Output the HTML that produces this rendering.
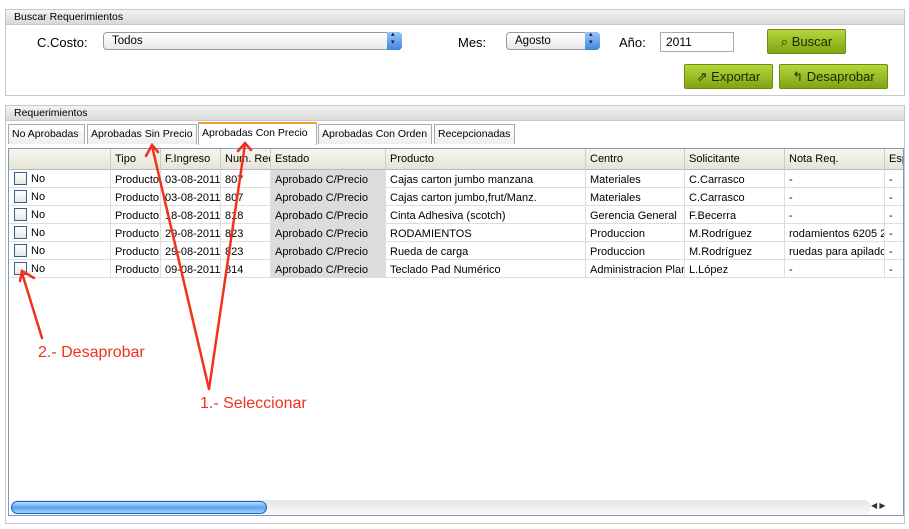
<!DOCTYPE html>
<html><head><meta charset="utf-8"><style>
*{box-sizing:border-box;margin:0;padding:0}
body{width:909px;height:529px;background:#fff;position:relative;font-family:"Liberation Sans",sans-serif;font-size:11px;color:#000;overflow:hidden}
.a{position:absolute}
.panel{position:absolute;border:1px solid #c8c8c8;background:#fff}
.hd{position:absolute;left:0;right:0;top:0;height:15px;background:linear-gradient(#f4f4f4,#d8d8d8);border-bottom:1px solid #c8c8c8;padding:1px 8px;font-size:10.5px}
.sel{position:absolute;height:18px;border:1px solid #999;border-radius:4px;background:linear-gradient(#fff,#e8e8e8);padding:2px 8px;font-size:11.5px}
.sel i{position:absolute;right:-1px;top:-1px;width:15px;height:18px;border-radius:0 4px 4px 0;background:linear-gradient(#9cc6f5,#3f86df);}
.sel i:before{content:"▴";position:absolute;left:4px;top:-2px;font-size:7px;font-style:normal;color:#123}
.sel i:after{content:"▾";position:absolute;left:4px;top:6px;font-size:7px;font-style:normal;color:#123}
.btn{position:absolute;height:25px;border:1px solid #6f8f0a;border-radius:2px;background:linear-gradient(#b7d53c,#7fa512);font-size:13px;color:#1a2a00;text-align:center;line-height:23px}
.tab{position:absolute;top:124px;height:20px;border:1px solid #aaa;border-bottom:none;background:linear-gradient(#fff,#eee);font-size:10.5px;padding:3px 3px}
.grid{position:absolute;left:8px;top:148px;width:896px;height:368px;border:1px solid #7d9ab8;background:#fff;overflow:hidden}
.row{position:absolute;left:0;width:896px;height:18px;border-bottom:1px solid #ddd;font-size:11px}
.c{position:absolute;top:0;height:18px;padding:4px 4px 0;white-space:nowrap;overflow:hidden;border-left:1px solid #ddd}
.hdr{background:linear-gradient(#f7f7f0,#e4e4d6);height:21px;border-bottom:1px solid #bbb}
.hdr .c{height:21px;padding-top:4px;border-left:1px solid #ccc}
.cb{position:absolute;left:5px;top:2px;width:13px;height:13px;border:1px solid #355f8c;background:linear-gradient(#fff,#e6e6e6)}
.red{position:absolute;color:#f0321e;font-size:16px}
</style></head><body>
<div class="panel" style="left:5px;top:9px;width:900px;height:87px">
 <div class="hd">Buscar Requerimientos</div>
</div>
<div class="a" style="left:37px;top:35px;font-size:13px">C.Costo:</div>
<div class="sel" style="left:103px;top:32px;width:299px">Todos<i></i></div>
<div class="a" style="left:458px;top:35px;font-size:13px">Mes:</div>
<div class="sel" style="left:506px;top:32px;width:94px">Agosto<i></i></div>
<div class="a" style="left:619px;top:35px;font-size:13px">Año:</div>
<div class="a" style="left:660px;top:32px;width:74px;height:20px;border:1px solid #aaa;padding:2px 5px;font-size:12px">2011</div>
<div class="btn" style="left:767px;top:29px;width:79px">⌕ Buscar</div>
<div class="btn" style="left:684px;top:64px;width:89px">⇗ Exportar</div>
<div class="btn" style="left:779px;top:64px;width:109px">↰ Desaprobar</div>

<div class="panel" style="left:5px;top:105px;width:900px;height:419px">
 <div class="hd">Requerimientos</div>
</div>
<div class="tab" style="left:8px;width:77px">No Aprobadas</div>
<div class="tab" style="left:87px;width:110px">Aprobadas Sin Precio</div>
<div class="tab" style="left:198px;top:122px;width:119px;height:23px;background:#fff;border-top:2px solid #f0a030">Aprobadas Con Precio</div>
<div class="tab" style="left:318px;width:114px">Aprobadas Con Orden</div>
<div class="tab" style="left:434px;width:81px">Recepcionadas</div>

<div class="grid">
 <div class="a" style="left:261px;top:21px;width:115px;height:108px;background:#dcdcdc"></div>
 <div class="row hdr" style="top:0">
  <div class="c" style="left:101px">Tipo</div><div class="c" style="left:151px">F.Ingreso</div><div class="c" style="left:211px;width:50px">Num. Req</div><div class="c" style="left:261px">Estado</div><div class="c" style="left:376px">Producto</div><div class="c" style="left:576px">Centro</div><div class="c" style="left:675px">Solicitante</div><div class="c" style="left:775px">Nota Req.</div><div class="c" style="left:875px">Esp</div>
 </div>
 <div class="row" style="top:21px"><div class="cb"></div><div class="a" style="left:22px;top:3px">No</div><div class="c" style="left:101px">Producto</div><div class="c" style="left:151px">03-08-2011</div><div class="c" style="left:211px">807</div><div class="c" style="left:261px">Aprobado C/Precio</div><div class="c" style="left:376px">Cajas carton jumbo manzana</div><div class="c" style="left:576px">Materiales</div><div class="c" style="left:675px">C.Carrasco</div><div class="c" style="left:775px">-</div><div class="c" style="left:875px">-</div></div>
 <div class="row" style="top:39px"><div class="cb"></div><div class="a" style="left:22px;top:3px">No</div><div class="c" style="left:101px">Producto</div><div class="c" style="left:151px">03-08-2011</div><div class="c" style="left:211px">807</div><div class="c" style="left:261px">Aprobado C/Precio</div><div class="c" style="left:376px">Cajas carton jumbo,frut/Manz.</div><div class="c" style="left:576px">Materiales</div><div class="c" style="left:675px">C.Carrasco</div><div class="c" style="left:775px">-</div><div class="c" style="left:875px">-</div></div>
 <div class="row" style="top:57px"><div class="cb"></div><div class="a" style="left:22px;top:3px">No</div><div class="c" style="left:101px">Producto</div><div class="c" style="left:151px">18-08-2011</div><div class="c" style="left:211px">818</div><div class="c" style="left:261px">Aprobado C/Precio</div><div class="c" style="left:376px">Cinta Adhesiva (scotch)</div><div class="c" style="left:576px">Gerencia General</div><div class="c" style="left:675px">F.Becerra</div><div class="c" style="left:775px">-</div><div class="c" style="left:875px">-</div></div>
 <div class="row" style="top:75px"><div class="cb"></div><div class="a" style="left:22px;top:3px">No</div><div class="c" style="left:101px">Producto</div><div class="c" style="left:151px">29-08-2011</div><div class="c" style="left:211px">823</div><div class="c" style="left:261px">Aprobado C/Precio</div><div class="c" style="left:376px">RODAMIENTOS</div><div class="c" style="left:576px">Produccion</div><div class="c" style="left:675px">M.Rodríguez</div><div class="c" style="left:775px;width:100px">rodamientos 6205 2</div><div class="c" style="left:875px">-</div></div>
 <div class="row" style="top:93px"><div class="cb"></div><div class="a" style="left:22px;top:3px">No</div><div class="c" style="left:101px">Producto</div><div class="c" style="left:151px">29-08-2011</div><div class="c" style="left:211px">823</div><div class="c" style="left:261px">Aprobado C/Precio</div><div class="c" style="left:376px">Rueda de carga</div><div class="c" style="left:576px">Produccion</div><div class="c" style="left:675px">M.Rodríguez</div><div class="c" style="left:775px;width:100px">ruedas para apilado</div><div class="c" style="left:875px">-</div></div>
 <div class="row" style="top:111px"><div class="cb"></div><div class="a" style="left:22px;top:3px">No</div><div class="c" style="left:101px">Producto</div><div class="c" style="left:151px">09-08-2011</div><div class="c" style="left:211px">814</div><div class="c" style="left:261px">Aprobado C/Precio</div><div class="c" style="left:376px">Teclado Pad Numérico</div><div class="c" style="left:576px;width:99px">Administracion Planta</div><div class="c" style="left:675px">L.López</div><div class="c" style="left:775px">-</div><div class="c" style="left:875px">-</div></div>
 <div class="a" style="left:2px;top:351px;width:860px;height:15px;border-radius:8px;background:linear-gradient(#e4e4e4,#fafafa)"></div>
 <div class="a" style="left:2px;top:352px;width:256px;height:13px;border-radius:7px;border:1px solid #1c5fc0;background:linear-gradient(#bcdcff,#5aa0ef 50%,#a8d0fa)"></div>
 <div class="a" style="left:862px;top:352px;font-size:8px;color:#333">◀ ▶</div>
</div>

<svg class="a" style="left:0;top:0" width="909" height="529">
 <g stroke="#f0321e" stroke-width="2.5" fill="none" stroke-linecap="round">
  <path d="M209 389 L152 146 M146 156 L152 145 L158 152"/>
  <path d="M209 389 L245 144 M238 151 L245 143 L251 150"/>
  <path d="M42 338 L22 273 M20 281 L22 271 L34 278"/>
 </g>
</svg>
<div class="red" style="left:38px;top:344px">2.- Desaprobar</div>
<div class="red" style="left:200px;top:395px">1.- Seleccionar</div>
</body></html>
